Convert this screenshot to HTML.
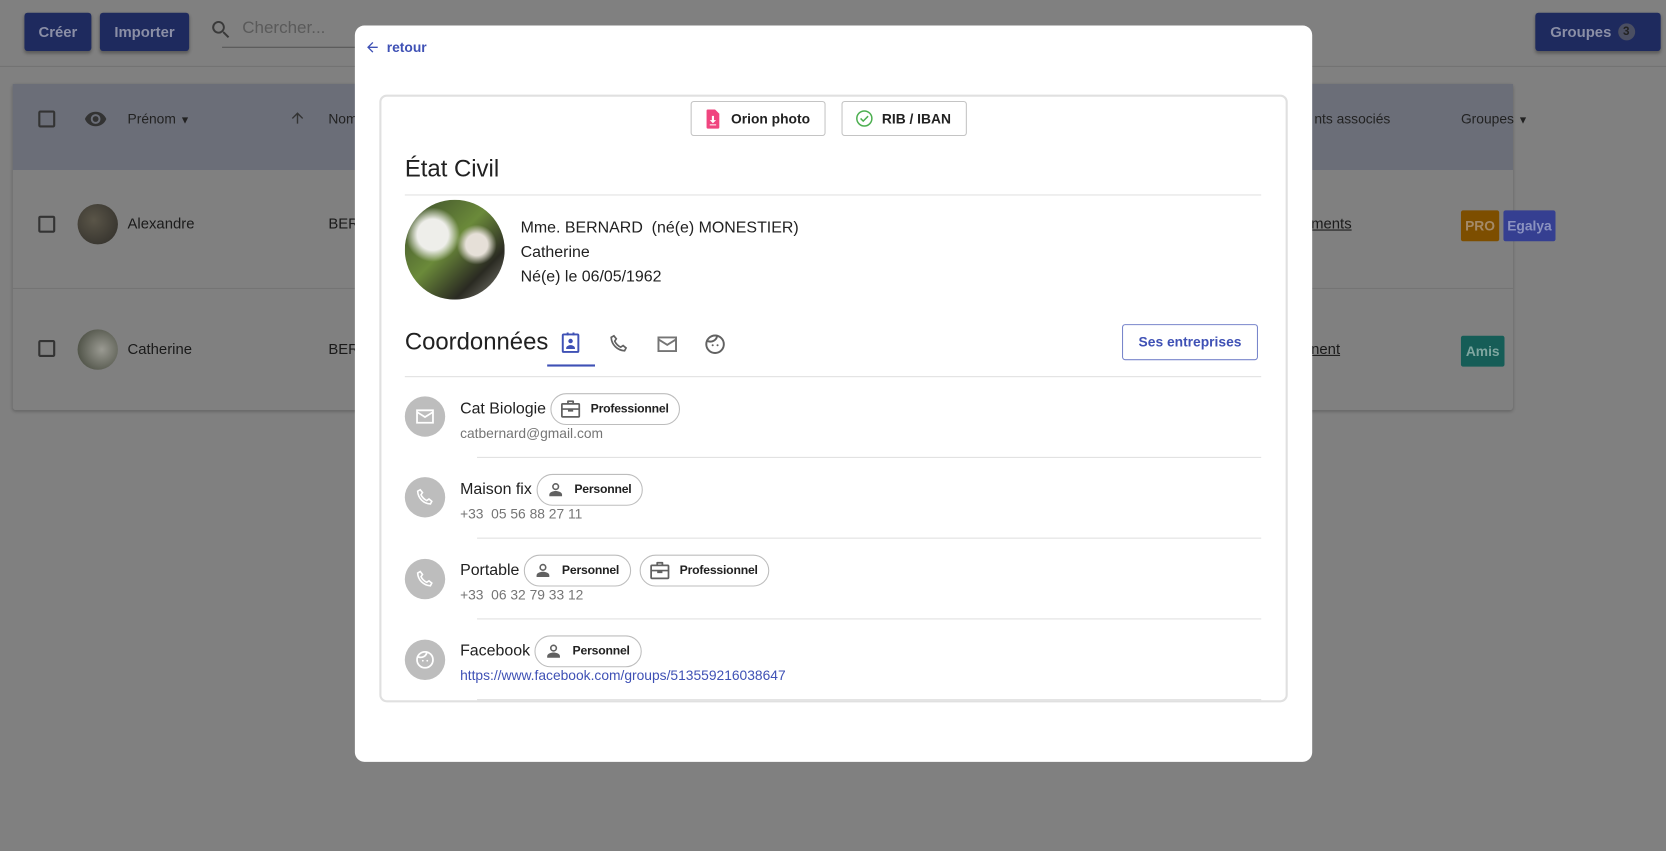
<!DOCTYPE html>
<html><head><meta charset="utf-8"><style>
*{box-sizing:border-box;margin:0;padding:0}
html,body{width:1666px;height:851px;overflow:hidden;background:#808080}
#w{position:absolute;left:0;top:0;width:1568px;height:801px;transform:scale(1.0625);transform-origin:0 0;font-family:"Liberation Sans",sans-serif;color:#212121}
.a{position:absolute}
.btn{position:absolute;background:#1e2a5e;color:#8b8fa6;font-size:14px;font-weight:bold;border-radius:3px;display:flex;align-items:center;justify-content:center;box-shadow:0 2px 3px rgba(0,0,0,.3)}
.chip{display:inline-flex;align-items:center;height:30px;border:1px solid #bdbdbd;border-radius:15px;padding:0 10px 0 8px;font-size:11.5px;font-weight:bold;color:#212121;vertical-align:middle;margin-left:4px;background:#fff;letter-spacing:-.2px}
.chip svg{margin-right:9px}
.ic{position:absolute;left:381px;width:38px;height:38px;border-radius:50%;background:#bdbdbd;display:flex;align-items:center;justify-content:center}
.hr{position:absolute;left:449px;width:738px;height:1px;background:#e0e0e0}
.t1{position:absolute;left:433px;font-size:15px;color:#212121}
.t2{position:absolute;left:433px;font-size:13px;color:#757575}
</style></head><body><div id="w">
<div class="btn" style="left:23px;top:12px;width:63px;height:36px">Créer</div>
<div class="btn" style="left:94px;top:12px;width:84px;height:36px">Importer</div>
<svg class="a" style="left:197px;top:17px" width="22" height="22" viewBox="0 0 24 24"><path fill="#3a3a3a" d="M15.5 14h-.8l-.3-.3A6.5 6.5 0 1 0 9.5 16a6.5 6.5 0 0 0 4.2-1.6l.3.3v.8l5 5 1.5-1.5-5-5zm-6 0a4.5 4.5 0 1 1 0-9 4.5 4.5 0 0 1 0 9z"/></svg>
<div class="a" style="left:228px;top:18px;font-size:16px;color:#5a5a5a">Chercher...</div>
<div class="a" style="left:209px;top:44px;width:130px;height:1px;background:#555"></div>
<div class="btn" style="left:1445px;top:12px;width:118px;height:36px;justify-content:flex-start;padding-left:14px">Groupes <span style="display:inline-block;width:16px;height:16px;border-radius:50%;background:#4b4f62;color:#222;font-size:11px;text-align:center;line-height:16px;margin-left:6px">3</span></div>
<div class="a" style="left:0;top:62px;width:1568px;height:1px;background:#727272"></div>
<div class="a" style="left:12px;top:79px;width:1412px;height:307px;background:#808080;box-shadow:0 1px 3px rgba(0,0,0,.25);border-radius:3px"></div>
<div class="a" style="left:12px;top:79px;width:1412px;height:81px;background:#6b6e78"></div>
<div class="a" style="left:12px;top:271px;width:1412px;height:1px;background:#747474"></div>
<div class="a" style="left:36px;top:104px;width:16px;height:16px;border:2px solid #333;border-radius:2px"></div>
<div class="a" style="left:36px;top:203px;width:16px;height:16px;border:2px solid #333;border-radius:2px"></div>
<div class="a" style="left:36px;top:320px;width:16px;height:16px;border:2px solid #333;border-radius:2px"></div>
<svg class="a" style="left:79px;top:101px" width="22" height="22" viewBox="0 0 24 24"><path fill="#333" d="M12 4.5C7 4.5 2.7 7.6 1 12c1.7 4.4 6 7.5 11 7.5s9.3-3.1 11-7.5c-1.7-4.4-6-7.5-11-7.5zM12 17a5 5 0 1 1 0-10 5 5 0 0 1 0 10zm0-8a3 3 0 1 0 0 6 3 3 0 0 0 0-6z"/></svg>
<div class="a" style="left:120px;top:104px;font-size:13px;color:#222">Prénom <span style="font-size:10px">▼</span></div>
<svg class="a" style="left:272px;top:103px" width="16" height="16" viewBox="0 0 24 24"><path fill="#333" d="M4 12l1.4 1.4L11 7.8V20h2V7.8l5.6 5.6L20 12l-8-8z"/></svg>
<div class="a" style="left:309px;top:104px;font-size:13px;color:#222">Nom</div>
<div class="a" style="left:1237px;top:104px;font-size:13px;color:#222">nts associés</div>
<div class="a" style="left:1375px;top:104px;font-size:13px;color:#222">Groupes <span style="font-size:10px">▼</span></div>
<div class="a" style="left:73px;top:192px;width:38px;height:38px;border-radius:50%;background:radial-gradient(circle at 40% 40%,#5a5548,#2e2c28)"></div>
<div class="a" style="left:73px;top:310px;width:38px;height:38px;border-radius:50%;background:radial-gradient(circle at 60% 50%,#9a9a92,#3c4034)"></div>
<div class="a" style="left:120px;top:202px;font-size:14px;color:#1a1a1a">Alexandre</div>
<div class="a" style="left:120px;top:320px;font-size:14px;color:#1a1a1a">Catherine</div>
<div class="a" style="left:309px;top:202px;font-size:14px;color:#1a1a1a">BER</div>
<div class="a" style="left:309px;top:320px;font-size:14px;color:#1a1a1a">BER</div>
<div class="a" style="left:1234px;top:202px;font-size:14px;color:#1a1a1a;text-decoration:underline">ments</div>
<div class="a" style="left:1234px;top:320px;font-size:14px;color:#1a1a1a;text-decoration:underline">nent</div>
<div class="a" style="left:1375px;top:198px;width:36px;height:29px;background:#7d4e00;color:#a48a68;font-size:13px;font-weight:bold;text-align:center;line-height:29px;border-radius:2px">PRO</div>
<div class="a" style="left:1415px;top:198px;width:49px;height:29px;background:#353f91;color:#8b92c0;font-size:13px;font-weight:bold;text-align:center;line-height:29px;border-radius:2px">Egalya</div>
<div class="a" style="left:1375px;top:316px;width:41px;height:29px;background:#165d57;color:#7fa6a0;font-size:13px;font-weight:bold;text-align:center;line-height:29px;border-radius:2px">Amis</div>

<div class="a" style="left:334px;top:24px;width:901px;height:693px;background:#fff;border-radius:9px"></div>
<svg class="a" style="left:343px;top:37px" width="15" height="15" viewBox="0 0 24 24"><path fill="#3f51b5" d="M20 11H7.8l5.6-5.6L12 4l-8 8 8 8 1.4-1.4L7.8 13H20z"/></svg>
<div class="a" style="left:364px;top:37px;font-size:13px;color:#3f51b5;font-weight:bold">retour</div>
<div class="a" style="left:357px;top:89px;width:855px;height:572px;border:2px solid #e0e0e0;border-radius:7px"></div>
<div class="a" style="left:650px;top:95px;width:127px;height:33px;border:1px solid #c4c4c4;border-radius:3px;display:flex;align-items:center;padding-left:12px;font-size:13px;font-weight:bold;color:#212121">
<svg width="16" height="20" viewBox="0 0 16 20" style="margin-right:9px"><path fill="#f0457f" d="M3 1h7l4 4v13a1 1 0 0 1-1 1H3a1 1 0 0 1-1-1V2a1 1 0 0 1 1-1z"/><path fill="#fff" d="M7 7h2v4h2l-3 3-3-3h2zM5 15h6v1H5z"/></svg>Orion photo</div>
<div class="a" style="left:792px;top:95px;width:118px;height:33px;border:1px solid #c4c4c4;border-radius:3px;display:flex;align-items:center;padding-left:12px;font-size:13px;font-weight:bold;color:#212121">
<svg width="17" height="17" viewBox="0 0 24 24" style="margin-right:8px"><circle cx="12" cy="12" r="10" fill="none" stroke="#4caf50" stroke-width="2"/><path d="M7 12l3.5 3.5L17 9" fill="none" stroke="#4caf50" stroke-width="2"/></svg>RIB / IBAN</div>
<div class="a" style="left:381px;top:146px;font-size:22.5px;color:#212121">État Civil</div>
<div class="a" style="left:381px;top:183px;width:806px;height:1px;background:#e0e0e0"></div>
<div class="a" style="left:381px;top:188px;width:94px;height:94px;border-radius:50%;background:radial-gradient(circle at 72% 45%,#e6e0d8 0 12%,transparent 22%),radial-gradient(circle at 28% 35%,#eeeeea 0 16%,transparent 28%),linear-gradient(135deg,#3a4a2a,#6b8a3a 45%,#2a2a22 75%,#8b8a80)"></div>
<div class="a" style="left:490px;top:203px;font-size:15px;line-height:23px;color:#212121">Mme. BERNARD&nbsp; (né(e) MONESTIER)<br>Catherine<br>Né(e) le 06/05/1962</div>
<div class="a" style="left:381px;top:309px;font-size:22.5px;color:#212121">Coordonnées</div>
<svg class="a" style="left:526px;top:312px" width="22" height="22" viewBox="0 0 24 24"><rect x="4" y="3" width="16" height="18" rx="1" fill="none" stroke="#3f51b5" stroke-width="2"/><path fill="#3f51b5" d="M8 1h2v3H8zM14 1h2v3h-2zM12 7.5a2.3 2.3 0 1 1 0 4.6 2.3 2.3 0 0 1 0-4.6zM7.5 17c0-2 3-3 4.5-3s4.5 1 4.5 3v1h-9z"/></svg>
<div class="a" style="left:515px;top:343px;width:45px;height:2px;background:#3f51b5"></div>
<svg class="a" style="left:572px;top:313px" width="21" height="21" viewBox="0 0 24 24"><path fill="none" stroke="#616161" stroke-width="1.8" d="M6.6 3.5l2.6 3.2-1.7 2.6c1.4 2.8 3.6 5 6.4 6.4l2.6-1.7 3.2 2.6-1.6 3c-8-.6-13.9-6.5-14.4-14.4z"/></svg>
<svg class="a" style="left:617px;top:313px" width="22" height="22" viewBox="0 0 24 24"><path fill="#757575" d="M2 4h20v16H2zm2 2v.5l8 5 8-5V6zm0 2.8V18h16V8.8l-8 5z"/></svg>
<svg class="a" style="left:662px;top:313px" width="22" height="22" viewBox="0 0 24 24"><circle cx="12" cy="12" r="9" fill="none" stroke="#616161" stroke-width="2"/><path d="M5 9c4 1 8-1 9-5M9.5 13h.1M14.5 13h.1" fill="none" stroke="#616161" stroke-width="2" stroke-linecap="round"/></svg>
<div class="a" style="left:1056px;top:305px;width:128px;height:34px;border:1px solid #7986cb;border-radius:3px;color:#3f51b5;font-size:13px;font-weight:bold;text-align:center;line-height:32px">Ses entreprises</div>
<div class="a" style="left:381px;top:354px;width:806px;height:1px;background:#e0e0e0"></div>

<div class="ic" style="top:373px"><svg width="20" height="20" viewBox="0 0 24 24"><path fill="#fff" d="M2 4h20v16H2zm2 2v.5l8 5 8-5V6zm0 2.8V18h16V8.8l-8 5z"/></svg></div>
<div class="t1" style="top:370px">Cat Biologie<span class="chip"><svg width="20" height="18" viewBox="0 0 24 22"><path fill="#616161" d="M9 1h6a1 1 0 0 1 1 1v2h5a2 2 0 0 1 2 2v13a2 2 0 0 1-2 2H3a2 2 0 0 1-2-2V6a2 2 0 0 1 2-2h5V2a1 1 0 0 1 1-1zm1 2v1h4V3zM3 6v4h18V6zm0 6v7h18v-7h-6v2H9v-2z"/></svg>Professionnel</span></div>
<div class="t2" style="top:400px">catbernard@gmail.com</div>
<div class="hr" style="top:430px"></div>

<div class="ic" style="top:449px"><svg width="20" height="20" viewBox="0 0 24 24"><path fill="none" stroke="#fff" stroke-width="1.8" d="M6.6 3.5l2.6 3.2-1.7 2.6c1.4 2.8 3.6 5 6.4 6.4l2.6-1.7 3.2 2.6-1.6 3c-8-.6-13.9-6.5-14.4-14.4z"/></svg></div>
<div class="t1" style="top:446px">Maison fix<span class="chip"><svg width="18" height="18" viewBox="0 0 24 24"><circle cx="12" cy="8" r="3.5" fill="none" stroke="#616161" stroke-width="2"/><path fill="#616161" d="M4 20v-2c0-3 5-4.5 8-4.5s8 1.5 8 4.5v2z"/></svg>Personnel</span></div>
<div class="t2" style="top:476px">+33&nbsp; 05 56 88 27 11</div>
<div class="hr" style="top:506px"></div>

<div class="ic" style="top:526px"><svg width="20" height="20" viewBox="0 0 24 24"><path fill="none" stroke="#fff" stroke-width="1.8" d="M6.6 3.5l2.6 3.2-1.7 2.6c1.4 2.8 3.6 5 6.4 6.4l2.6-1.7 3.2 2.6-1.6 3c-8-.6-13.9-6.5-14.4-14.4z"/></svg></div>
<div class="t1" style="top:522px">Portable<span class="chip"><svg width="18" height="18" viewBox="0 0 24 24"><circle cx="12" cy="8" r="3.5" fill="none" stroke="#616161" stroke-width="2"/><path fill="#616161" d="M4 20v-2c0-3 5-4.5 8-4.5s8 1.5 8 4.5v2z"/></svg>Personnel</span><span class="chip" style="margin-left:8px"><svg width="20" height="18" viewBox="0 0 24 22"><path fill="#616161" d="M9 1h6a1 1 0 0 1 1 1v2h5a2 2 0 0 1 2 2v13a2 2 0 0 1-2 2H3a2 2 0 0 1-2-2V6a2 2 0 0 1 2-2h5V2a1 1 0 0 1 1-1zm1 2v1h4V3zM3 6v4h18V6zm0 6v7h18v-7h-6v2H9v-2z"/></svg>Professionnel</span></div>
<div class="t2" style="top:552px">+33&nbsp; 06 32 79 33 12</div>
<div class="hr" style="top:582px"></div>

<div class="ic" style="top:602px"><svg width="20" height="20" viewBox="0 0 24 24"><circle cx="12" cy="12" r="9" fill="none" stroke="#fff" stroke-width="2"/><path d="M5 9c4 1 8-1 9-5M9.5 13h.1M14.5 13h.1" fill="none" stroke="#fff" stroke-width="2" stroke-linecap="round"/></svg></div>
<div class="t1" style="top:598px">Facebook<span class="chip"><svg width="18" height="18" viewBox="0 0 24 24"><circle cx="12" cy="8" r="3.5" fill="none" stroke="#616161" stroke-width="2"/><path fill="#616161" d="M4 20v-2c0-3 5-4.5 8-4.5s8 1.5 8 4.5v2z"/></svg>Personnel</span></div>
<div class="t2" style="top:628px;color:#3f51b5">https://www.facebook.com/groups/513559216038647</div>
<div class="hr" style="top:658px"></div>
</div></body></html>
